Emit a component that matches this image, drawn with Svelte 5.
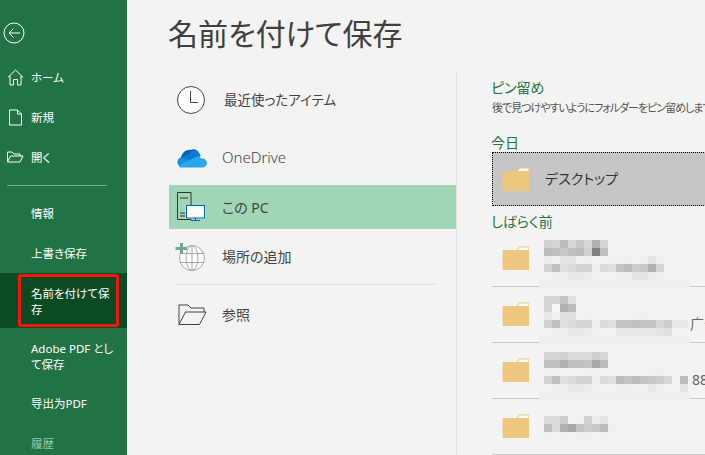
<script>
  // グレー値（16進2桁）でモザイクを表現
  const blurred = [
    {
      top: 9,
      rows: [
        'd0 d4 bc d8 c8 d8 b0 d4',
        'bc c0 c8 c0 bc d0 80 c0',
        'ec f0 e4 e4 f0 ee f2 f3 f0 f0 ee f3 ee e4 ee',
        'd2 c0 e0 dc d2 d2 ee dc e0 c4 bc cc c8 b0 d4',
        'f3 ee ee e8 e8 ec f0 f3 f3 ee ee e4 e4 ec ee'
      ],
      band: true
    },
    {
      top: 9,
      rows: [
        'd6 d6 c4 e0',
        'd4 f8 b0 bc',
        'e8 f0 e0 e0 f3 f0 f3 f3 f3 f3 f3 f0 ee f3',
        'd0 c0 e0 dc d4 d4 ee dc e0 c4 c4 c0 c4 c4 d8 cc e8 e8',
        'f3 ee ee e8 e8 ec f0 f3 f3 e8 e8 e8 e8 e8 e4 e0 f3 f3'
      ],
      band: true,
      tail: '广告',
      tailLeft: 146
    },
    {
      top: 9,
      rows: [
        'd4 d6 d0 dc dc dc ce d8',
        'c0 c0 b0 c0 c0 c4 a8 bc',
        'f0 f0 f3 f3 f3 f0 f0 f3 f3 f3 f3 f3 f3 f0 ee',
        'd2 c0 e0 dc d2 d2 ee dc e0 bc c4 bc c4 c8 cc d8 f3 bc',
        'f3 ee ee e8 e8 ec f0 f3 f3 ee ee f0 f0 e8 ee f3 f3 e4'
      ],
      band: true,
      tail: '88',
      tailLeft: 148
    },
    {
      top: 17,
      rows: [
        'dc dc cc f3 f0 d0 ec e4',
        'c0 dc b0 a8 c4 cc c8 bc ee',
        'f0 f3 f0 f3 ee ee f3 f0'
      ],
      band: false
    }
  ];

  const gray = (v) => `#${v}${v}${v}`;
</script>

{#snippet folder()}
  <svg class="folder" width="28" height="24" viewBox="0 0 28 24">
    <path d="M0.5 4 H14 L18 0.5 H27 V24 H0.5 Z" fill="#edc77f" />
    <path d="M15.5 4 L18.5 1.5 H26.5 V4 Z" fill="#fff" />
  </svg>
{/snippet}

<div class="app">
  <nav class="side">
    <div class="back">
      <svg width="22" height="22" viewBox="0 0 22 22" fill="none" stroke="#fff" stroke-width="1">
        <circle cx="11" cy="11" r="10" />
        <path d="M6 11 H17 M10.5 6.5 L6 11 L10.5 15.5" />
      </svg>
    </div>

    <div class="item">
      <svg class="ic" width="17" height="17" viewBox="0 0 17 17" fill="none" stroke="#fff">
        <path d="M0.8 8.5 L8.5 1 L16.2 8.5 M3 6.8 V16 H6.5 V10.5 H10.5 V16 H14 V6.8" />
      </svg>
      ホーム
    </div>
    <div class="item">
      <svg class="ic" width="17" height="17" viewBox="0 0 17 17" fill="none" stroke="#fff">
        <path d="M2.5 1 H10.5 L14.5 5 V16 H2.5 Z M10.5 1 V5 H14.5" />
      </svg>
      新規
    </div>
    <div class="item">
      <svg class="ic" width="17" height="17" viewBox="0 0 17 17" fill="none" stroke="#fff">
        <path d="M0.5 13 V3 H5 L7 5 H13 V7 M0.5 13 L3.5 7 H16 L13 13 Z" />
      </svg>
      開く
    </div>

    <div class="rule"></div>

    <div class="item">情報</div>
    <div class="item">上書き保存</div>
    <div class="item current">名前を付けて保存</div>
    <div class="item tall">Adobe PDF として保存</div>
    <div class="item">导出为PDF</div>
    <div class="item off">履歴</div>
  </nav>

  <main class="main">
    <h1>名前を付けて保存</h1>

    <div class="cols">
      <section class="places">
        <div class="place first">
          <svg width="30" height="30" viewBox="0 0 30 30" fill="none" stroke="#444">
            <circle cx="14" cy="15" r="13.5" fill="#fff" />
            <path d="M13.5 6 V17.5 H21" />
          </svg>
          <span class="recent">最近使ったアイテム</span>
        </div>
        <div class="place">
          <svg width="30" height="20" viewBox="0 0 30 20">
            <path d="M12 17 L4 19 C0 17 -1 11 4 9.5 C5 4 10 1 14 2 C17 0 22 2 23 8 L14 13 Z" fill="#0364b8" />
            <path d="M12 6 C14 2 19 1 22 5 C23 6 23.5 7 23.6 8 L14 14 L7 9.6 C8 7 10 6 12 6 Z" fill="#0f78d4" />
            <path d="M7 9.6 C4 9 1 11 0.7 14 C0.6 15 1 16 1.6 17 L14 13 Z" fill="#1490df" />
            <path d="M3 19.5 H25 C28 19.5 30 17.5 30 15 C30 12 27 10 24 10.5 C22 7.5 20 8 18 9.5 L1.6 17 C2 18.5 2.5 19 3 19.5 Z" fill="#28a8ea" />
          </svg>
          <span class="latin">OneDrive</span>
        </div>
        <div class="place active">
          <svg width="30" height="30" viewBox="0 0 30 30" fill="none">
            <path d="M0.5 0.5 H14 V27.5 H0.5 Z M3 6 H11 M3 21 H8 M3 24 H8" stroke="#333" />
            <rect x="8.5" y="13" width="20" height="14" fill="#c9e6f2" />
            <rect x="9.5" y="13.5" width="18" height="12.5" fill="#fff" stroke="#0063b1" />
            <path d="M18.5 26 V28.5 M14 28.5 H23" stroke="#0063b1" />
          </svg>
          <span>この PC</span>
        </div>
        <div class="place add">
          <svg width="30" height="30" viewBox="0 0 30 30" fill="none" stroke="#a6a6a6">
            <circle cx="17" cy="16" r="12.5" fill="#fff" />
            <ellipse cx="17" cy="16" rx="6" ry="12.5" />
            <path d="M17 3.5 V28.5 M5 11.5 H29 M5 20.5 H29" />
            <path d="M5 1 H8 V5 H12 V8 H8 V12 H5 V8 H0.5 V5 H5 Z" fill="#6fa98f" stroke="none" />
          </svg>
          <span>場所の追加</span>
        </div>
        <div class="sep"></div>
        <div class="place">
          <svg width="30" height="22" viewBox="0 0 30 22" fill="none" stroke="#444">
            <path d="M2 20.5 V1 H11 L14 4 H27 V8 M2 20.5 H22.5 L29 8 H8.5 L2 20.5 Z" />
          </svg>
          <span>参照</span>
        </div>
      </section>

      <section class="files">
        <h2>ピン留め</h2>
        <p class="hint">後で見つけやすいようにフォルダーをピン留めします</p>
        <h2 class="today">今日</h2>
        <div class="desk">
          {@render folder()}
          <span>デスクトップ</span>
        </div>
        <h2 class="earlier">しばらく前</h2>

        {#each blurred as row}
          <div class="row">
            {@render folder()}
            <div class="mosaic" style="padding-top: {row.top}px">
              {#each row.rows as line}
                <div class="line">
                  {#each line.split(' ') as v}
                    <i style="background: {gray(v)}"></i>
                  {/each}
                </div>
              {/each}
              {#if row.band}<div class="band"></div>{/if}
              {#if row.tail}<span class="tail" style="left: {row.tailLeft}px">{row.tail}</span>{/if}
            </div>
          </div>
        {/each}
      </section>
    </div>
  </main>
</div>

<style>
  :global(body) {
    margin: 0;
    overflow: hidden;
  }

  .app {
    display: flex;
    width: 705px;
    height: 455px;
    overflow: hidden;
    background: #f3f3f3;
    color: #333;
    font-family: 'Noto Sans', 'Noto Sans CJK JP', sans-serif;
    font-feature-settings: 'palt';
  }

  .side {
    flex: 0 0 127px;
    background: #217346;
    color: #fff;
    font-size: 11.5px;
  }

  .back {
    height: 57px;
    padding: 22px 0 0 3px;
    box-sizing: border-box;
  }

  .item {
    position: relative;
    display: flex;
    align-items: center;
    height: 40px;
    padding: 2px 10px 0 31px;
    box-sizing: border-box;
    line-height: 16px;
  }

  .ic {
    position: absolute;
    left: 7px;
    top: 12px;
  }

  .rule {
    height: 1px;
    margin: 8px 20px 7px 7px;
    background: #6fb08b;
  }

  .current {
    height: 55px;
    background: #0b4b23;
  }

  .current::after {
    content: '';
    position: absolute;
    left: 18px;
    top: 1px;
    width: 101px;
    height: 53px;
    box-sizing: border-box;
    border: 3px solid #f5150f;
    border-radius: 3px;
  }

  .tall {
    height: 55px;
  }

  .off {
    color: #9cc3ab;
  }

  .main {
    flex: 1;
    min-width: 0;
  }

  h1 {
    margin: 0;
    height: 73px;
    padding: 14px 0 0 41px;
    box-sizing: border-box;
    font-size: 30px;
    line-height: 40px;
    font-weight: 400;
    color: #404040;
  }

  .cols {
    display: flex;
  }

  .places {
    flex: 0 0 288px;
    height: 382px;
    margin-left: 42px;
    padding-top: 5px;
    box-sizing: border-box;
    border-right: 1px solid #e1e1e1;
  }

  .place {
    display: flex;
    align-items: center;
    height: 44px;
    margin-top: 6px;
    padding-left: 8px;
    font-size: 14px;
    color: #444;
  }

  .place svg {
    flex: 0 0 30px;
    margin-right: 15px;
  }

  .place span {
    padding-bottom: 2px;
  }

  .first {
    margin: 0 0 14px 0;
  }

  .first svg {
    margin-right: 17px;
  }

  .recent {
    font-size: 13.5px;
  }

  .latin {
    font-size: 15px;
    font-weight: 300;
  }

  .active {
    margin-top: 5px;
    background: #a0d5b5;
  }

  .place.active span {
    padding-bottom: 0;
  }

  .add svg {
    margin-left: -2px;
    margin-right: 17px;
  }

  .sep {
    height: 1px;
    margin: 5px 20px 8px 6px;
    background: #e1e1e1;
  }

  .sep + .place {
    margin-top: 0;
  }

  .files {
    flex: 1;
    min-width: 0;
    padding-left: 35px;
    overflow: hidden;
  }

  h2 {
    margin: 0 0 0 -1px;
    height: 20px;
    padding-top: 5px;
    box-sizing: content-box;
    font-size: 14px;
    line-height: 20px;
    font-weight: 400;
    color: #217346;
  }

  .hint {
    margin: 0;
    height: 16px;
    padding-top: 2px;
    font-size: 11px;
    letter-spacing: -1px;
    line-height: 16px;
    color: #555;
    white-space: nowrap;
  }

  .today {
    padding-top: 17px;
    height: 20px;
    margin-bottom: -1px;
  }

  .desk {
    display: flex;
    align-items: center;
    width: 230px;
    height: 54px;
    box-sizing: border-box;
    padding: 0 0 0 9px;
    border: 1px dotted #000;
    background: #c6c6c6;
    font-size: 14px;
    color: #333;
  }

  .desk span {
    margin-left: 15px;
    padding-bottom: 2px;
  }

  .earlier {
    height: 19px;
    padding-top: 6px;
  }

  .row {
    display: flex;
    height: 56px;
    box-sizing: border-box;
    padding-left: 10px;
    border-bottom: 1px solid #c8c8c8;
  }

  .row .folder {
    flex: 0 0 28px;
    margin-top: 15px;
  }

  .mosaic {
    position: relative;
    margin-left: 14px;
    flex: 1;
  }

  .line {
    display: flex;
  }

  .line i {
    flex: 0 0 8px;
    height: 8px;
  }

  .band {
    width: 151px;
    height: 8px;
    margin-left: -5px;
    background: #eeeeee;
  }

  .tail {
    position: absolute;
    top: 29px;
    font-size: 14px;
    line-height: 16px;
    color: #666;
    white-space: nowrap;
  }
</style>
